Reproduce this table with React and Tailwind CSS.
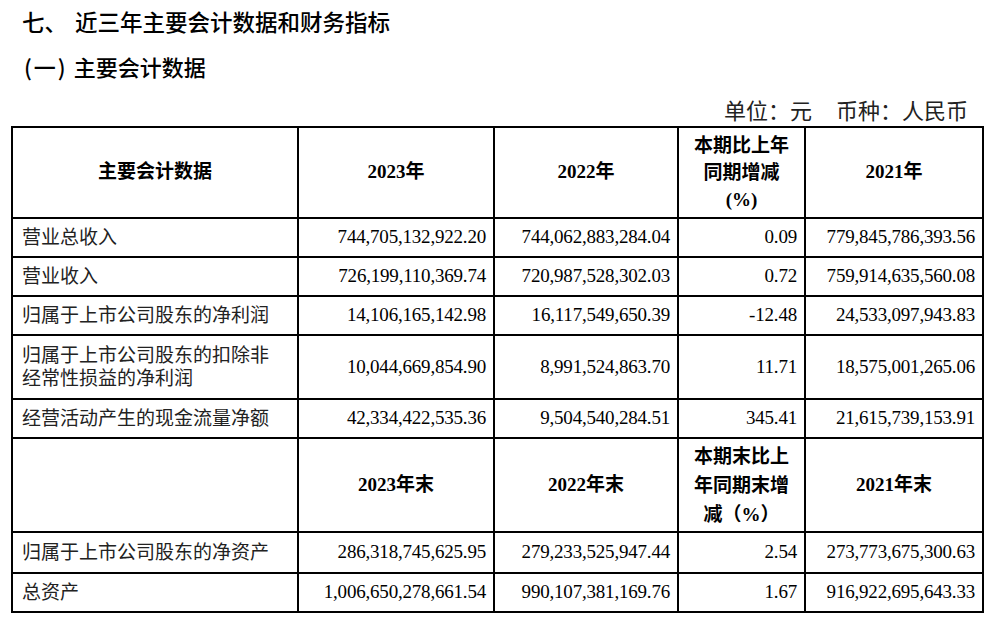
import React from "react";

const serif = "font-['Liberation_Serif','Noto_Sans_CJK_SC',serif]";
const sans = "font-['Noto_Sans_CJK_SC','Liberation_Sans',sans-serif]";

const rowsA = [
  ["营业总收入", "744,705,132,922.20", "744,062,883,284.04", "0.09", "779,845,786,393.56"],
  ["营业收入", "726,199,110,369.74", "720,987,528,302.03", "0.72", "759,914,635,560.08"],
  ["归属于上市公司股东的净利润", "14,106,165,142.98", "16,117,549,650.39", "-12.48", "24,533,097,943.83"],
  ["归属于上市公司股东的扣除非\n经常性损益的净利润", "10,044,669,854.90", "8,991,524,863.70", "11.71", "18,575,001,265.06"],
  ["经营活动产生的现金流量净额", "42,334,422,535.36", "9,504,540,284.51", "345.41", "21,615,739,153.91"],
];

const rowsB = [
  ["归属于上市公司股东的净资产", "286,318,745,625.95", "279,233,525,947.44", "2.54", "273,773,675,300.63"],
  ["总资产", "1,006,650,278,661.54", "990,107,381,169.76", "1.67", "916,922,695,643.33"],
];

const cell = "border-2 border-black";

const DataRow = ({ row, h }) => (
  <tr className={h}>
    <td className={`${cell} pl-[9px] pr-1 text-[19px] leading-[23px] text-[#222] whitespace-pre-line`}>
      {row[0]}
    </td>
    {row.slice(1).map((v, i) => (
      <td key={i} className={`${cell} pr-[7px] text-right text-[19px] tracking-[-0.2px]`}>
        {v}
      </td>
    ))}
  </tr>
);

const HeadRow = ({ h, cols, change, lh }) => (
  <tr className={h}>
    <td className={`${cell} text-center font-bold text-[19px]`}>{cols[0]}</td>
    <td className={`${cell} text-center font-bold text-[19px]`}>{cols[1]}</td>
    <td className={`${cell} text-center font-bold text-[19px]`}>{cols[2]}</td>
    <td className={`${cell} text-center font-bold text-[19px] ${lh} whitespace-pre-line`}>{change}</td>
    <td className={`${cell} text-center font-bold text-[19px]`}>{cols[3]}</td>
  </tr>
);

export default function App() {
  return (
    <div className="w-[1000px] h-[626px] bg-white text-black overflow-hidden">
      <div className={`${sans} flex pl-[22px] pt-[6px] text-[22.5px] font-medium leading-[30px]`}>
        <span>七、</span>
        <span className="ml-[8px]">近三年主要会计数据和财务指标</span>
      </div>
      <div className={`${sans} flex items-center pl-[24px] mt-[15px] text-[22px] font-medium leading-[30px]`}>
        <span className="pr-[2px]">(</span>
        <span>一</span>
        <span className="pl-[2px]">)</span>
        <span className="ml-[8px]">主要会计数据</span>
      </div>
      <div className={`${sans} flex justify-end mt-[13px] pr-[32px] text-[22px] leading-[30px] text-[#222]`}>
        <span>单位：元</span>
        <span className="ml-[24px]">币种：人民币</span>
      </div>
      <table className={`${serif} ml-[11px] mt-[2px] border-collapse table-fixed w-[971px]`}>
        <colgroup>
          <col className="w-[286px]" />
          <col className="w-[196px]" />
          <col className="w-[184px]" />
          <col className="w-[127px]" />
          <col className="w-[178px]" />
        </colgroup>
        <tbody>
          <HeadRow
            h="h-[91px]"
            lh="leading-[27px]"
            cols={["主要会计数据", "2023年", "2022年", "2021年"]}
            change={"本期比上年\n同期增减\n(%)"}
          />
          <DataRow row={rowsA[0]} h="h-[39px]" />
          <DataRow row={rowsA[1]} h="h-[39px]" />
          <DataRow row={rowsA[2]} h="h-[39px]" />
          <DataRow row={rowsA[3]} h="h-[64px]" />
          <DataRow row={rowsA[4]} h="h-[39px]" />
          <HeadRow
            h="h-[94px]"
            lh="leading-[29px]"
            cols={["", "2023年末", "2022年末", "2021年末"]}
            change={"本期末比上\n年同期末增\n减（%）"}
          />
          <DataRow row={rowsB[0]} h="h-[41px]" />
          <DataRow row={rowsB[1]} h="h-[39px]" />
        </tbody>
      </table>
    </div>
  );
}
